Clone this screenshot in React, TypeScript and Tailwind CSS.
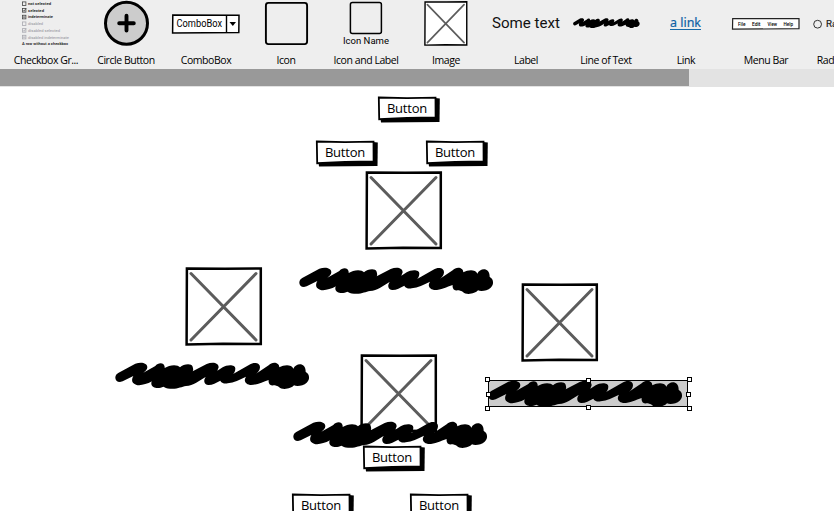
import type { ReactNode } from 'react';

const SKETCH = 'Roboto, "Open Sans", sans-serif';

function Tool({ label, children }: { label: string; children: ReactNode }) {
  return (
    <div className="flex h-[69px] w-20 shrink-0 flex-col items-center">
      <div className="flex h-[52px] w-20 shrink-0 justify-center overflow-hidden">{children}</div>
      <span className="text-[10.5px] leading-4 tracking-[-0.45px] whitespace-nowrap text-black">{label}</span>
    </div>
  );
}

const checks = [
  { text: 'not selected', w: 23, state: 'empty', off: false },
  { text: 'selected', w: 16, state: 'check', off: false },
  { text: 'indeterminate', w: 25, state: 'dash', off: false },
  { text: 'disabled', w: 15, state: 'empty', off: true },
  { text: 'disabled selected', w: 32, state: 'check', off: true },
  { text: 'disabled indeterminate', w: 41, state: 'dash', off: true },
];

function CheckboxGroup() {
  return (
    <svg width="80" height="53" viewBox="0 0 80 53" fontFamily={SKETCH} fontSize="4">
      {checks.map((c, i) => {
        const y = 1.9 + i * 6.68;
        const color = c.off ? '#a9a9b0' : '#444';
        return (
          <g key={c.text}>
            <rect x="16.5" y={y} width="3.4" height="3.6" fill="none" stroke={color} strokeWidth="0.8" />
            {c.state === 'check' && <path d={`M17 ${y + 1.6}l1 1.2 2-3`} fill="none" stroke={color} strokeWidth="0.8" />}
            {c.state === 'dash' && <path d={`M17 ${y + 1.8}h2.4`} stroke={color} strokeWidth="0.9" />}
            <text x="22" y={y + 3.2} fontWeight={c.off ? 400 : 600} fill={c.off ? '#909098' : '#222'} textLength={c.w} lengthAdjust="spacingAndGlyphs">{c.text}</text>
          </g>
        );
      })}
      <text x="16" y="44.6" fontWeight="600" fill="#222" textLength="46" lengthAdjust="spacingAndGlyphs">A row without a checkbox</text>
    </svg>
  );
}

const scribble =
  'M42 366C24 366 24 344 38 338L88 311C105 305 124 308 124 322C124 328 118 334 112 338L148 318C156 307 174 306 176 320V324' +
  'C190 314 215 312 222 322C232 312 256 308 260 320C262 328 262 330 260 334L302 312C320 305 338 308 338 322L334 332L350 322' +
  'C362 314 388 312 388 326C388 334 384 340 380 343L430 314C444 306 462 308 462 322C462 330 456 338 450 341L488 316' +
  'C498 304 520 306 520 322C534 314 556 312 562 326C570 308 600 306 599 336C612 342 612 360 602 368C592 378 572 380 564 376' +
  'C556 386 528 392 518 380C512 378 508 376 504 376C494 378 486 372 488 360C470 366 450 376 432 375C414 372 414 358 420 350' +
  'C400 360 385 368 365 370C355 372 345 368 343 362C330 368 318 376 306 375C290 372 294 356 300 350C280 362 262 376 240 378' +
  'C226 380 215 388 192 386C182 386 176 382 172 380C160 386 138 386 136 372C136 368 136 366 138 364C120 374 100 378 90 374' +
  'C76 370 76 358 82 348L50 364Z';

function Scribble({ className = '' }: { className?: string }) {
  return (
    <svg className={className} viewBox="27 306 585 81" preserveAspectRatio="none">
      <path d={scribble} />
    </svg>
  );
}

function Picture({ className = '' }: { className?: string }) {
  return (
    <svg className={className} viewBox="0 0 78 79" preserveAspectRatio="none">
      <path d="M1.9 1.6L40 1.8L75.8 1.4L75.8 77.1L38 76.8L1.6 77.4Z" fill="#fff" stroke="#000" strokeWidth="2.5" />
      <path d="M6 6.5L71 73M71 6.5L6 73" stroke="#5c5c5c" strokeWidth="3" strokeLinecap="round" />
    </svg>
  );
}

function SketchButton({ className }: { className: string }) {
  return (
    <div className={`absolute h-[27px] w-[63px] ${className}`}>
      <svg className="absolute inset-0" width="63" height="27" viewBox="0 0 63 27">
        <path d="M58 2L62.8 2.5L62.5 26L4 26.5L3.5 22Z" fill="#000" />
        <path d="M1.8 1.5L30 2.1L58.5 1.7L58.6 21.5L30 21.9L2.2 23.2Z" fill="#fff" stroke="#000" strokeWidth="1.8" />
      </svg>
      <span className="relative flex h-6 items-center justify-center pr-[3px] text-[13px] leading-6 tracking-[-0.2px] text-black">Button</span>
    </div>
  );
}

const handles = [
  'left-[1px] top-0', 'left-[102px] top-[1px]', 'left-[203px] top-0',
  'left-[2px] top-[15px]', 'left-[202px] top-[15px]',
  'left-[1px] top-[29px]', 'left-[102px] top-[28px]', 'left-[203px] top-[29px]',
];

export default function App() {
  return (
    <div className="flex h-[511px] w-[834px] flex-col overflow-hidden bg-white [font-family:'Open_Sans','Noto_Sans',sans-serif]">
      <div className="flex h-[69px] shrink-0 overflow-hidden bg-[#eee] pl-1.5">
        <Tool label="Checkbox Gr..."><CheckboxGroup /></Tool>
        <Tool label="Circle Button">
          <svg width="80" height="53" viewBox="0 0 80 53">
            <circle cx="40.5" cy="23.3" r="21" fill="#ccc" stroke="#000" strokeWidth="3" />
            <path d="M33.2 23.2H47.8M40.5 15.8V30.6" stroke="#000" strokeWidth="3.9" strokeLinecap="round" />
          </svg>
        </Tool>
        <Tool label="ComboBox">
          <svg width="80" height="53" viewBox="0 0 80 53" fontFamily={SKETCH}>
            <path d="M6.8 15L73 15.3L72.8 32.6L6.6 33Z" fill="#fff" stroke="#000" strokeWidth="1.5" />
            <path d="M60.5 15V33" stroke="#000" strokeWidth="1.4" />
            <path d="M63.5 22H70L66.8 26Z" fill="#000" />
            <text x="10.5" y="26.7" fontSize="10" fill="#000" textLength="45.5" lengthAdjust="spacingAndGlyphs">ComboBox</text>
          </svg>
        </Tool>
        <Tool label="Icon">
          <svg width="80" height="53" viewBox="0 0 80 53"><rect x="19.9" y="2.9" width="41.2" height="41.2" rx="2.5" fill="none" stroke="#000" strokeWidth="1.9" /></svg>
        </Tool>
        <Tool label="Icon and Label">
          <svg width="80" height="53" viewBox="0 0 80 53" fontFamily={SKETCH}>
            <rect x="24.4" y="2.6" width="31" height="31" rx="2" fill="none" stroke="#000" strokeWidth="1.5" />
            <text x="17" y="43.8" fontSize="9.2" fill="#000" textLength="46" lengthAdjust="spacingAndGlyphs">Icon Name</text>
          </svg>
        </Tool>
        <Tool label="Image"><Picture className="mt-[1px] h-[45px] w-[44px]" /></Tool>
        <Tool label="Label">
          <svg width="80" height="53" viewBox="0 0 80 53" fontFamily={SKETCH}>
            <text x="6" y="28" fontSize="14" fill="#111" textLength="68" lengthAdjust="spacingAndGlyphs">Some text</text>
          </svg>
        </Tool>
        <Tool label="Line of Text"><Scribble className="mt-[18px] h-[10px] w-[67px]" /></Tool>
        <Tool label="Link">
          <svg width="80" height="53" viewBox="0 0 80 53" fontFamily='"Noto Sans", sans-serif'>
            <text x="24" y="26.8" fontSize="13" fill="#0f62a5" stroke="#0f62a5" strokeWidth="0.2" textLength="31" lengthAdjust="spacingAndGlyphs">a link</text>
            <path d="M24 29.5H55" stroke="#1769a8" strokeWidth="1" />
          </svg>
        </Tool>
        <Tool label="Menu Bar">
          <svg width="80" height="53" viewBox="0 0 80 53" fontFamily={SKETCH} fontSize="4.7" fontWeight="500">
            <path d="M6.7 18.6L73 18.7V28.7L6.5 29.2Z" fill="#fff" stroke="#222" strokeWidth="1.2" />
            <text x="12" y="25.5" textLength="7.5" lengthAdjust="spacingAndGlyphs">File</text>
            <text x="26" y="25.5" textLength="8.5" lengthAdjust="spacingAndGlyphs">Edit</text>
            <text x="41.5" y="25.5" textLength="9.5" lengthAdjust="spacingAndGlyphs">View</text>
            <text x="57.5" y="25.5" textLength="9.5" lengthAdjust="spacingAndGlyphs">Help</text>
          </svg>
        </Tool>
        <Tool label="Radio Button">
          <svg width="80" height="53" viewBox="0 0 80 53" fontFamily={SKETCH}>
            <circle cx="11.6" cy="24.2" r="3.9" fill="none" stroke="#333" strokeWidth="1" />
            <text x="20" y="27.2" fontSize="9.7" fill="#222" stroke="#222" strokeWidth="0.2">Radio</text>
          </svg>
        </Tool>
      </div>
      <div className="h-[18px] shrink-0 bg-[#e3e3e3]"><div className="h-[17px] w-[689px] bg-[#999]" /></div>
      <div className="relative grow">
        <SketchButton className="top-[9px] left-[377px]" />
        <SketchButton className="top-[53px] left-[315px]" />
        <SketchButton className="top-[53px] left-[425px]" />
        <Picture className="absolute top-[84px] left-[365px] h-[79px] w-[78px]" />
        <Picture className="absolute top-[180px] left-[185px] h-[79px] w-[78px]" />
        <Picture className="absolute top-[196px] left-[521px] h-[79px] w-[78px]" />
        <Picture className="absolute top-[267px] left-[360px] h-[79px] w-[78px]" />
        <Scribble className="absolute top-[180px] left-[299px] h-[27px] w-[195px]" />
        <Scribble className="absolute top-[275px] left-[115px] h-[27px] w-[195px]" />
        <Scribble className="absolute top-[334px] left-[293px] h-[27px] w-[195px]" />
        <SketchButton className="top-[358px] left-[362px]" />
        <SketchButton className="top-[406px] left-[291px]" />
        <SketchButton className="top-[406px] left-[409px]" />
        <div className="absolute top-[290px] left-[484px] h-[35px] w-[210px]">
          <div className="absolute top-[3px] left-[4px] h-[27px] w-[200px] border border-black bg-[#ccc]" />
          <Scribble className="absolute top-[3px] left-[4px] h-[27px] w-[195px]" />
          {handles.map((place) => (
            <i key={place} className={`absolute size-[5px] border border-black bg-white ${place}`} />
          ))}
        </div>
      </div>
    </div>
  );
}
